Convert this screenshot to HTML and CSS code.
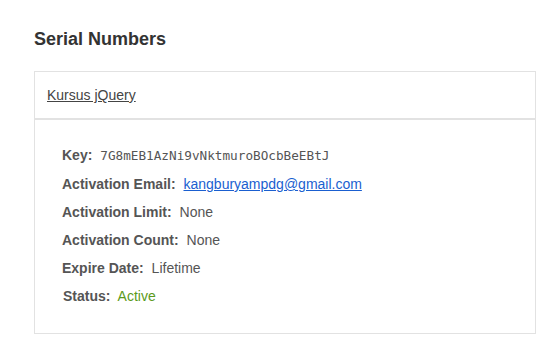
FILE: index.html
```html
<!DOCTYPE html>
<html lang="en">
<head>
    <meta charset="UTF-8">
    <meta name="viewport" content="width=device-width, initial-scale=1.0">
    <title>Serial Numbers</title>
    <link rel="stylesheet" href="styles.css">
</head>
<body>
<div class="page">
    <h2 class="title">Serial Numbers</h2>

    <!-- Kartu serial -->
    <div class="serial-card">
        <div class="serial-header">
            <a href="#" class="course-link">Kursus jQuery</a>
        </div>
        <ul class="serial-details">
            <li><span class="label">Key:</span> <code class="key">7G8mEB1AzNi9vNktmuroBOcbBeEBtJ</code></li>
            <li><span class="label">Activation Email:</span> <a href="#" class="email">kangburyampdg@gmail.com</a></li>
            <li><span class="label">Activation Limit:</span> None</li>
            <li><span class="label">Activation Count:</span> None</li>
            <li><span class="label">Expire Date:</span> Lifetime</li>
            <li class="status-row"><span class="label">Status:</span> <span class="active">Active</span></li>
        </ul>
    </div>
</div>
</body>
</html>
```

FILE: styles.css
```css
body {
    font-family: "Liberation Sans", Arial, sans-serif;
    margin: 0;
    padding: 0;
    background: #fff;
    color: #555;
}

.page {
    padding: 28px 24px 0 34px;
}

.title {
    font-size: 18px;
    font-weight: bold;
    color: #333;
    margin: 0 0 21px;
    line-height: 22px;
}

.serial-card {
    border: 1px solid #e2e2e2;
}

.serial-header {
    height: 46px;
    padding: 0 12px;
    display: flex;
    align-items: center;
    border-bottom: 2px solid #e2e2e2;
}

.course-link {
    font-size: 14px;
    color: #444;
}

.serial-details {
    list-style: none;
    margin: 0;
    padding: 21px 27px 23px;
    font-size: 14px;
}

.serial-details li {
    line-height: 28px;
}

.label {
    font-weight: bold;
    margin-right: 4px;
}

.key {
    font-family: "DejaVu Sans Mono", "Liberation Mono", monospace;
    font-size: 12.7px;
}

.email {
    color: #1a5fd0;
}

.status-row {
    padding-left: 1px;
}

.active {
    color: #5c9a1b;
}
```
